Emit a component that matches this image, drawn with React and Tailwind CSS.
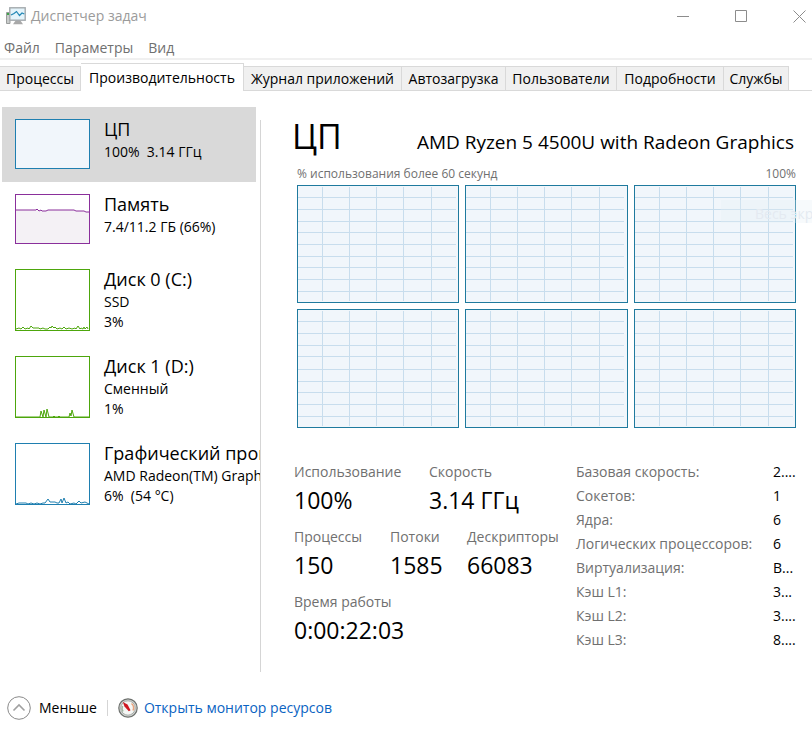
import clsx from "clsx";

const tabs = [
  { name: "Процессы", width: "w-[81px]" },
  { name: "Производительность", width: "w-[163px]", active: true },
  { name: "Журнал приложений", width: "w-[158px]" },
  { name: "Автозагрузка", width: "w-[104px]" },
  { name: "Пользователи", width: "w-[111px]" },
  { name: "Подробности", width: "w-[107px]" },
  { name: "Службы", width: "w-[65px]" },
];

const devices = [
  { title: "ЦП", lines: ["100%  3.14 ГГц"], thumb: "h-[50px] border-[#1f7fb0] bg-[#f1f6fb]", active: true },
  {
    title: "Память",
    lines: ["7.4/11.2 ГБ (66%)"],
    thumb: "h-[50px] border-[#8a2f9b] bg-white text-[#8a2f9b]",
    area: "M0 15H20L21 14L23 16L25 15L26 16H30L32 15H58L60 16H68L70 17H73V48H0Z",
    path: "M0 15H20L21 14L23 16L25 15L26 16H30L32 15H58L60 16H68L70 17H73",
    height: 48,
  },
  {
    title: "Диск 0 (C:)",
    lines: ["SSD", "3%"],
    thumb: "h-[62px] border-[#4da60c] bg-white text-[#4da60c]",
    path: "M0 59L3 58L5 59L7 57L9 59L12 58L13 59L15 56L17 58H23L24 59L27 58L29 59L32 59L34 57L35 58L36 56L38 58L39 57L41 59L44 58L46 59L48 57L50 59L53 58L56 59L59 58L60 59L62 56L64 59L65 58L67 59L68 57L69 59L71 57L72 59",
    height: 60,
  },
  {
    title: "Диск 1 (D:)",
    lines: ["Сменный", "1%"],
    thumb: "h-[62px] border-[#4da60c] bg-white text-[#4da60c]",
    path: "M0 60H24L25 54L27 60L28 53L30 60L31 52L33 60H37L38 59L39 60H42L43 59L44 60H53L54 56L55 59L56 53L58 60H73",
    height: 60,
  },
  {
    title: "Графический процессор 0",
    lines: ["AMD Radeon(TM) Graphics", "6%  (54 °C)"],
    thumb: "h-[62px] border-[#1f7fb0] bg-white text-[#1f7fb0]",
    path: "M0 60L3 59H10L12 60L15 59L18 60L21 59L24 60L27 59H29L32 55L34 58H39L41 59H43L45 55L46 59L48 54L50 59L52 58L54 60L58 59L60 60L63 57L65 59L69 58L73 60",
    height: 60,
  },
];

const details = [
  ["Базовая скорость:", "2...."],
  ["Сокетов:", "1"],
  ["Ядра:", "6"],
  ["Логических процессоров:", "6"],
  ["Виртуализация:", "В..."],
  ["Кэш L1:", "3..."],
  ["Кэш L2:", "3...."],
  ["Кэш L3:", "8...."],
];

function AppIcon() {
  return (
    <svg width="20" height="18" viewBox="0 0 20 18" aria-hidden="true">
      <path d="M0.5 5.5H4V16.5H0.5Z" fill="#c9cccb" stroke="#9a9d9c" />
      <path d="M1 7H3.5" stroke="#3fa34a" strokeWidth="2" />
      <path d="M10 13H14L17 17.2H7Z" fill="#a9a9a9" />
      <rect x="3.8" y="0.8" width="15.4" height="12.4" fill="#e4f4fb" stroke="#a3a9ad" strokeWidth="1.4" />
      <path d="M5 8L8 6.5L10.5 4.5L13.5 8.5L16 6L18.3 7" fill="none" stroke="#2287b5" strokeWidth="1.2" />
    </svg>
  );
}

function MonitorIcon() {
  return (
    <svg width="20" height="20" viewBox="0 0 20 20" aria-hidden="true">
      <circle cx="10" cy="10" r="9.2" fill="#d3d6d3" stroke="#6e716e" strokeWidth="1.2" />
      <circle cx="10" cy="10" r="7.2" fill="#f4f6f4" stroke="#a9ada9" />
      <path d="M5 13.5A6 6 0 0 1 4.5 8" fill="none" stroke="#9fb59f" strokeWidth="1.5" />
      <path d="M13.5 5.5A6 6 0 0 1 15 12.5" fill="none" stroke="#e9a27c" strokeWidth="1.5" />
      <path d="M4.8 4L9.5 6.5L12.5 12.2L10.8 13.2L6.5 8.5Z" fill="#cf1720" />
    </svg>
  );
}

function CoreChart() {
  return (
    <div className="border border-[#1f7a9e] bg-[#f1f6fb]">
      <svg className="block size-full" viewBox="0 0 160 116" preserveAspectRatio="none" aria-hidden="true">
        <path
          d="M0 11.5H158M0 23.5H158M0 35.5H158M0 46.5H158M0 58.5H158M0 70.5H158M0 81.5H158M0 93.5H158M0 105.5H158M24.5 1V115M51.5 1V115M78.5 1V115M105.5 1V115M133.5 1V115"
          stroke="#c8dded"
          fill="none"
          shapeRendering="crispEdges"
          vectorEffect="non-scaling-stroke"
        />
      </svg>
    </div>
  );
}

function Stat({ label, value, className }) {
  return (
    <div className={clsx("whitespace-nowrap", className)}>
      <dt className="text-sm leading-6 text-[#707070]">{label}</dt>
      <dd className="text-[23px] leading-8">{value}</dd>
    </div>
  );
}

function Device({ title, lines, thumb, area, path, height, active }) {
  return (
    <li>
      <button
        type="button"
        className={clsx("mr-1 flex w-[254px] pb-[13px] pl-[13px] text-left", active && "bg-[#d9d9d9]")}
      >
        <span className={clsx("mt-3 w-[75px] shrink-0 border", thumb)}>
          {path && (
            <svg className="block size-full" viewBox={`0 0 73 ${height}`} fill="none" aria-hidden="true">
              {area && <path d={area} fill="#f4f1f5" />}
              <path d={path} stroke="currentColor" />
            </svg>
          )}
        </span>
        <span className="-mb-3 ml-3.5 flex flex-col pt-2.5 whitespace-pre">
          <span className="text-lg leading-[25px]">{title}</span>
          {lines.map((line) => (
            <span key={line} className="text-sm leading-5">{line}</span>
          ))}
        </span>
      </button>
    </li>
  );
}

export default function App() {
  return (
    <div className="relative flex min-h-screen flex-col overflow-hidden bg-white font-['Open_Sans','Noto_Sans',sans-serif] text-black">
      <header className="flex h-8 items-center justify-between pl-1.5">
        <div className="flex items-center gap-[5px]">
          <AppIcon />
          <h1 className="text-sm text-[#9b9b9b]">Диспетчер задач</h1>
        </div>
        <div className="flex gap-8 text-[#8c8c8c]">
          <button type="button" aria-label="Свернуть" className="flex h-8 w-[26px] items-center justify-center">
            <svg width="13" height="13" stroke="currentColor"><path d="M0 6.5H12" /></svg>
          </button>
          <button type="button" aria-label="Развернуть" className="flex h-8 w-[26px] items-center justify-center">
            <svg width="13" height="13" stroke="currentColor" fill="none"><path d="M0.5 0.5H11.5V11.5H0.5Z" /></svg>
          </button>
          <button type="button" aria-label="Закрыть" className="flex h-8 w-[26px] items-center justify-center">
            <svg width="13" height="13" stroke="currentColor"><path d="M0.5 0.5L12.5 12.5M12.5 0.5L0.5 12.5" /></svg>
          </button>
        </div>
      </header>

      <nav className="flex h-7 items-end gap-[15px] border-b-2 border-[#f0f0f0] pl-1 text-sm text-[#707070]">
        <button type="button">Файл</button>
        <button type="button">Параметры</button>
        <button type="button">Вид</button>
      </nav>

      <div role="tablist" className="flex h-[31px] items-end text-sm whitespace-nowrap">
        {tabs.map((tab) => (
          <button
            key={tab.name}
            type="button"
            role="tab"
            aria-selected={!!tab.active}
            className={clsx(
              "flex shrink-0 items-center justify-center border-r border-[#d9d9d9]",
              tab.width,
              tab.active ? "h-7 border-t bg-white" : "h-[25px] border-y bg-[#f0f0f0]"
            )}
          >
            {tab.name}
          </button>
        ))}
        <div className="flex-1 border-b border-[#d9d9d9]" />
      </div>

      <div className="flex flex-1">
        <aside className="w-[260px] shrink-0 overflow-hidden pt-4 pl-0.5">
          <ul>
            {devices.map((device) => (
              <Device key={device.title} {...device} />
            ))}
          </ul>
        </aside>
        <div className="mt-[29px] w-px shrink-0 bg-[#d5d5d5]" />

        <main className="min-w-0 flex-1 pt-[19px] pr-4 pl-[31px]">
          <div className="flex items-baseline justify-between pr-0.5 whitespace-nowrap">
            <h2 className="text-[34px] leading-[52px]">ЦП</h2>
            <p className="text-[19px]">AMD Ryzen 5 4500U with Radeon Graphics</p>
          </div>
          <div className="mt-px flex justify-between pl-[5px] text-xs leading-[22px] text-[#707070]">
            <span>% использования более 60 секунд</span>
            <span>100%</span>
          </div>
          <div className="ml-[5px] grid grid-cols-3 grid-rows-[118px_119px] gap-1.5">
            {[0, 1, 2, 3, 4, 5].map((core) => (
              <CoreChart key={core} />
            ))}
          </div>

          <div className="mt-8 flex pl-0.5">
            <dl className="flex w-[282px] shrink-0 flex-col gap-[9px]">
              <div className="flex">
                <Stat label="Использование" value="100%" className="w-[135px]" />
                <Stat label="Скорость" value="3.14 ГГц" />
              </div>
              <div className="flex">
                <Stat label="Процессы" value="150" className="w-24" />
                <Stat label="Потоки" value="1585" className="w-[77px]" />
                <Stat label="Дескрипторы" value="66083" />
              </div>
              <Stat label="Время работы" value="0:00:22:03" />
            </dl>
            <dl className="flex-1 text-sm leading-6 whitespace-nowrap">
              {details.map(([label, value]) => (
                <div key={label} className="flex">
                  <dt className="w-[197px] text-[#707070]">{label}</dt>
                  <dd>{value}</dd>
                </div>
              ))}
            </dl>
          </div>
        </main>
      </div>

      <footer className="flex items-center pt-6 pb-3.5 pl-[7px] text-sm">
        <button type="button" className="flex items-center gap-2">
          <svg width="24" height="24" fill="none" aria-hidden="true">
            <circle cx="12" cy="12" r="11.3" stroke="#8a8a8a" />
            <path d="M6.5 14.5L12 9L17.5 14.5" stroke="#a0a0a0" strokeWidth="1.6" />
          </svg>
          Меньше
        </button>
        <div className="mx-2.5 h-4 w-px bg-[#d5d5d5]" />
        <a href="#resmon" className="flex items-center gap-1.5 text-[#0a63c2]">
          <MonitorIcon />
          Открыть монитор ресурсов
        </a>
      </footer>

      {/* fading fullscreen hint */}
      <div className="absolute top-[200px] left-[721px] h-[23px] w-[120px] bg-[#e6edf6]/30 pl-[34px] text-sm leading-7 whitespace-nowrap text-[#e4eaf1]">
        Весь экран
      </div>
    </div>
  );
}
